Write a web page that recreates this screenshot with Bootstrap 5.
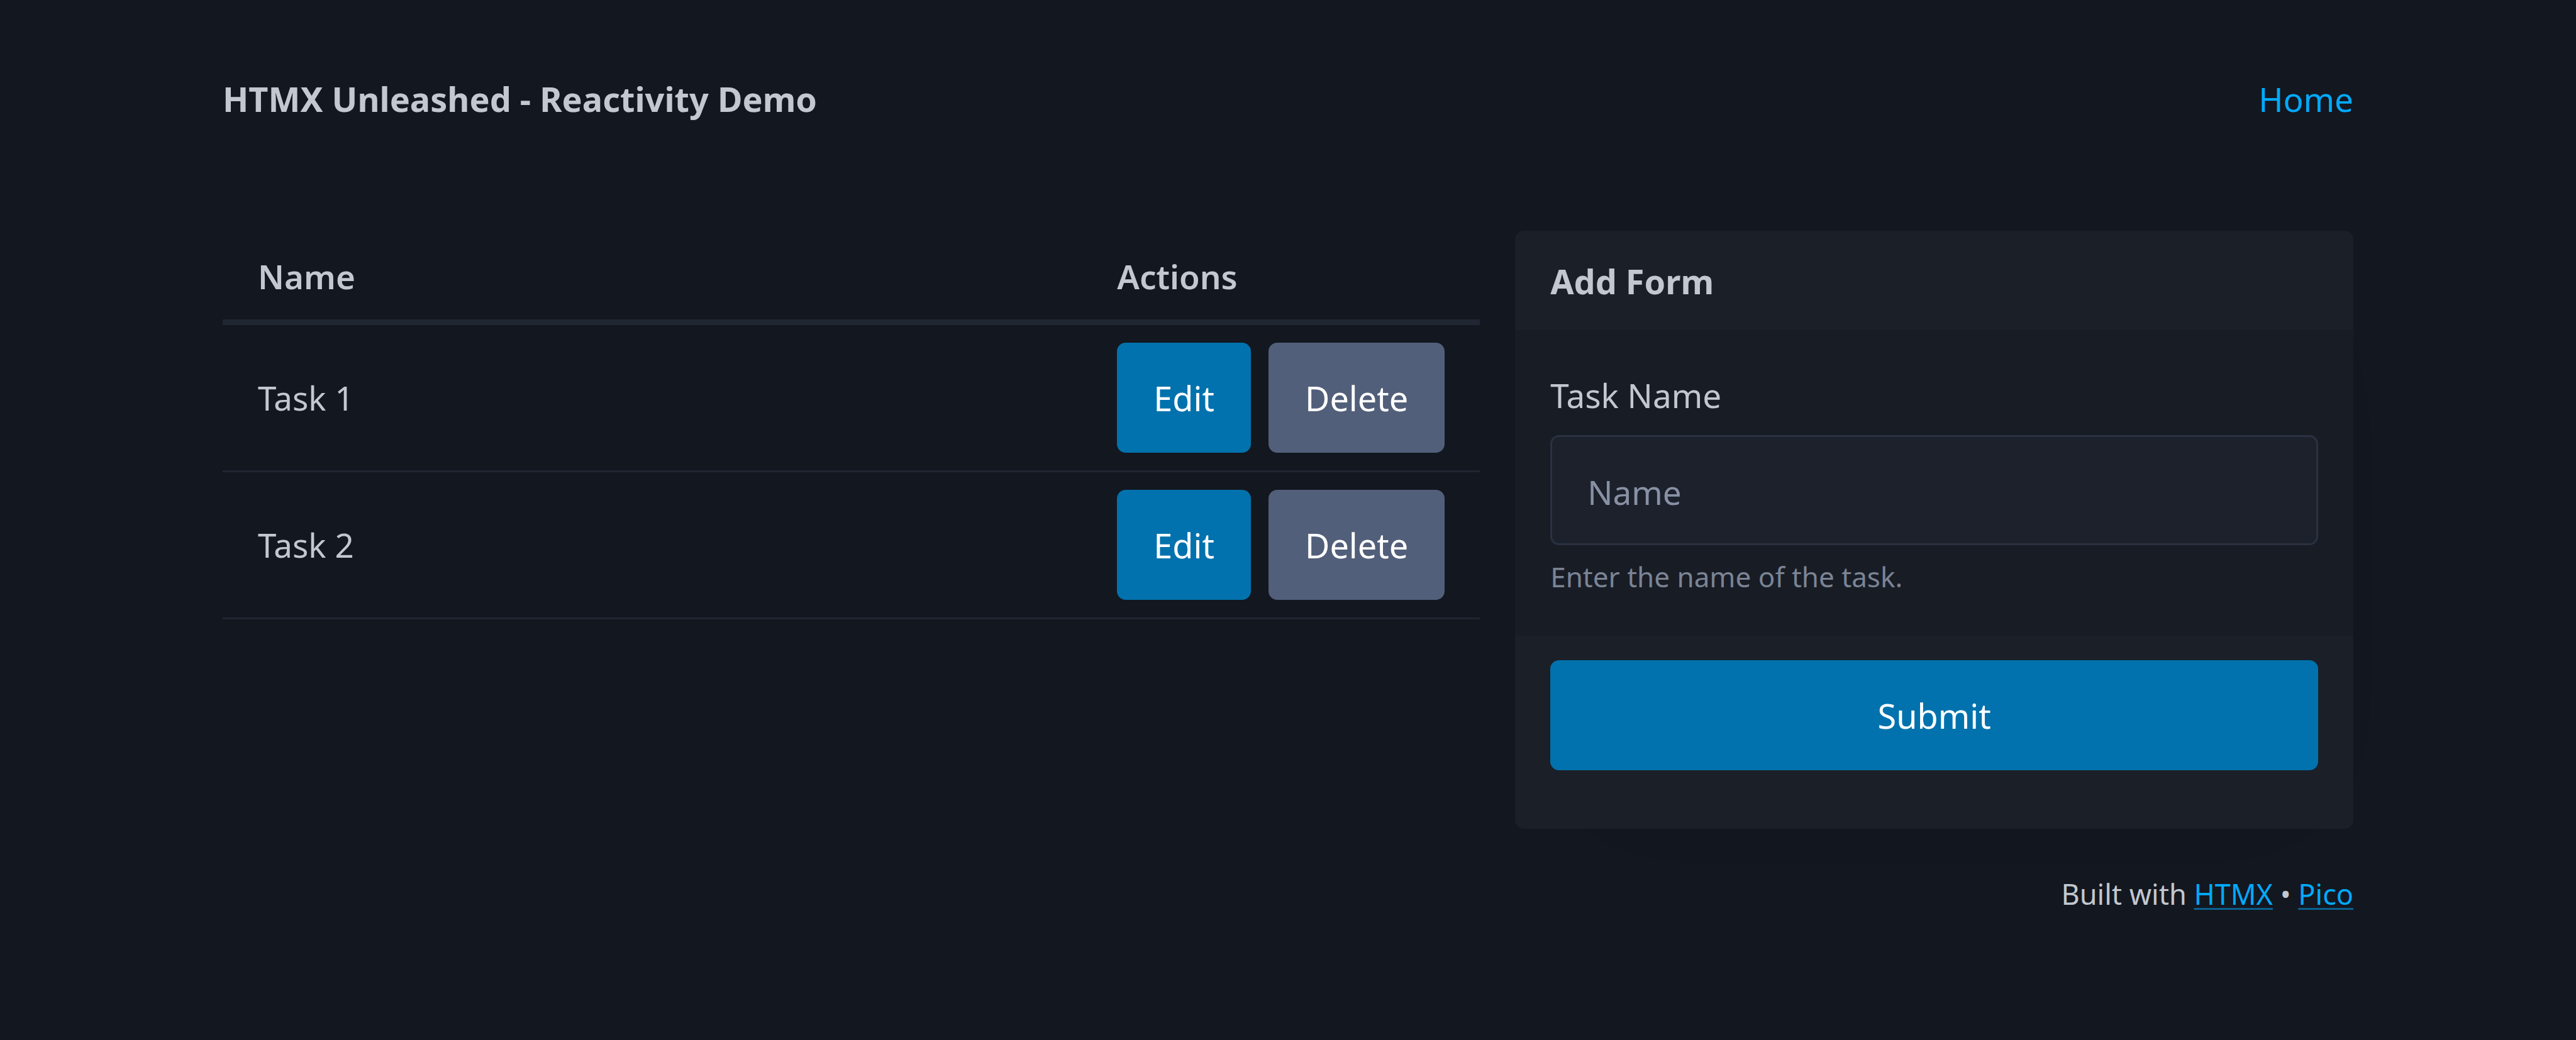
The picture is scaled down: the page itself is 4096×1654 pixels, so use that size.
<!DOCTYPE html>
<html lang="en" data-bs-theme="dark">
<head>
<meta charset="utf-8">
<meta name="viewport" content="width=device-width, initial-scale=1">
<title>HTMX Unleashed - Reactivity Demo</title>
<link href="https://cdn.jsdelivr.net/npm/bootstrap@5.3.0/dist/css/bootstrap.min.css" rel="stylesheet">
<script src="https://cdn.jsdelivr.net/npm/bootstrap@5.3.0/dist/js/bootstrap.bundle.min.js"></script>
<style>
:root {
  --page: #13171f;
  --ink: #c2c7d0;
  --line: #202632;
  --accent: #01aaff;
  --gutter: 56px;
}
body {
  background: var(--page);
  color: var(--ink);
  font-family: "Noto Sans", "Open Sans", sans-serif;
  font-size: 53px;
  line-height: 89px;
}
a { color: var(--accent); }
.shell { max-width: 3500px; padding-inline: var(--gutter); }
.topbar { padding-top: 113px; padding-bottom: 165px; }
.topbar .brand { font-size: 54px; }

/* Task list on the left, form on the right */
.layout { display: grid; grid-template-columns: 3fr 2fr; gap: var(--gutter); align-items: start; }

/* Task table */
.tasks {
  --bs-table-bg: transparent;
  --bs-table-color: var(--ink);
  color: var(--ink);
  border-collapse: separate;
  border-spacing: 0;
}
.tasks > thead > tr > th {
  padding: 28px var(--gutter) 24px;
  border-bottom: 9px solid var(--line);
  font-weight: 600;
}
.tasks > tbody > tr > td {
  padding: 28px var(--gutter);
  border-bottom: 3px solid var(--line);
}
.tasks th:last-child { width: 1px; }
.actions { gap: 28px; }

/* Buttons */
.btn {
  --bs-btn-padding-x: 55px;
  --bs-btn-font-size: 54px;
  --bs-btn-border-width: 3px;
  --bs-btn-border-radius: 14px;
  padding-top: 41px;
  padding-bottom: 39px;
  line-height: 89px;
}
.btn-primary { --bs-btn-bg: #0172ad; --bs-btn-border-color: #0172ad; --bs-btn-hover-bg: #017fc0; --bs-btn-hover-border-color: #017fc0; }
.btn-secondary { --bs-btn-bg: #525f7a; --bs-btn-border-color: #525f7a; --bs-btn-hover-bg: #5d6b89; --bs-btn-hover-border-color: #5d6b89; }

/* Form card */
.card {
  --bs-card-bg: #181c25;
  --bs-card-cap-bg: #1b1f28;
  --bs-card-border-width: 0;
  --bs-card-border-radius: 14px;
  --bs-card-inner-border-radius: 14px;
  color: var(--ink);
  box-shadow: 28px 56px 336px rgba(0, 0, 0, .008);
}
.card-header { padding: 36px var(--gutter) 33px; font-size: 54px; }
.card-body { padding: 59px var(--gutter) 57px; }
.card-footer { padding: 39px var(--gutter) 93px; }
.form-label { margin-bottom: 19px; display: block; }
.form-control, .form-control:focus {
  background: #1c212c;
  color: var(--ink);
  border: 3px solid #2a3140;
  border-radius: 14px;
}
.form-control {
  padding: 43px 56px 37px;
  font-size: 53px;
  line-height: 89px;
}
.form-control::placeholder { color: #8891a4; }
.form-text { margin-top: 13px; color: #7b8495; font-size: 44px; line-height: 74px; }

.credits { margin-top: 67px; padding-bottom: 112px; font-size: 45px; line-height: 74px; }
.credits a {
  text-decoration-color: rgba(1, 170, 255, .5);
  text-decoration-thickness: 3px;
  text-underline-offset: 5px;
  text-decoration-skip-ink: none;
}
@media (max-width: 2200px) { .layout { grid-template-columns: 1fr; } }
</style>
</head>
<body>
<div class="container-fluid shell">
  <header>
    <nav class="topbar d-flex justify-content-between align-items-center">
      <strong class="brand">HTMX Unleashed - Reactivity Demo</strong>
      <a class="text-decoration-none" href="#">Home</a>
    </nav>
  </header>

  <main class="layout">
    <table class="table tasks align-middle mb-0">
      <thead>
        <tr><th scope="col">Name</th><th scope="col">Actions</th></tr>
      </thead>
      <tbody>
        <tr>
          <td>Task 1</td>
          <td>
            <div class="actions d-flex">
              <button type="button" class="btn btn-primary">Edit</button>
              <button type="button" class="btn btn-secondary">Delete</button>
            </div>
          </td>
        </tr>
        <tr>
          <td>Task 2</td>
          <td>
            <div class="actions d-flex">
              <button type="button" class="btn btn-primary">Edit</button>
              <button type="button" class="btn btn-secondary">Delete</button>
            </div>
          </td>
        </tr>
      </tbody>
    </table>

    <form class="card">
      <div class="card-header border-0"><strong>Add Form</strong></div>
      <div class="card-body">
        <label class="form-label" for="task-name">Task Name</label>
        <input class="form-control" type="text" id="task-name" name="name" placeholder="Name" aria-describedby="task-help">
        <div class="form-text" id="task-help">Enter the name of the task.</div>
      </div>
      <div class="card-footer border-0">
        <button type="submit" class="btn btn-primary w-100">Submit</button>
      </div>
    </form>
  </main>

  <footer class="credits text-end">
    Built with <a href="#">HTMX</a> • <a href="#">Pico</a>
  </footer>
</div>
</body>
</html>
